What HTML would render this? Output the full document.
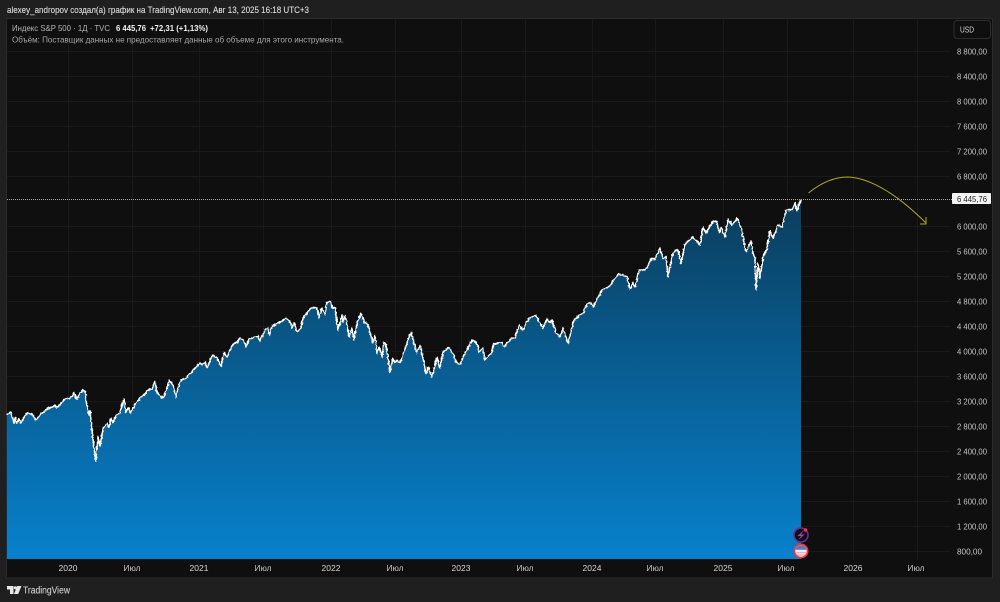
<!DOCTYPE html>
<html><head><meta charset="utf-8"><style>
html,body{margin:0;padding:0;background:#1f1f1f;width:1000px;height:602px;overflow:hidden}
svg{display:block}
text{font-family:"Liberation Sans",sans-serif;font-size:8.5px;fill:#c8c8c8}
.p text{text-anchor:start;fill:#c4c4c4;font-size:8.5px}
.t text{text-anchor:middle;font-size:8.5px;fill:#c4c4c4}
</style></head><body>
<svg width="1000" height="602" viewBox="0 0 1000 602" xmlns="http://www.w3.org/2000/svg">
<defs><linearGradient id="g" gradientUnits="userSpaceOnUse" x1="0" y1="199" x2="0" y2="559">
<stop offset="0" stop-color="#0a3d5c"/><stop offset="1" stop-color="#0881cd"/></linearGradient>
<filter id="j" x="-2%" y="-5%" width="104%" height="110%"><feTurbulence type="fractalNoise" baseFrequency="0.35" numOctaves="2" seed="4"/><feDisplacementMap in="SourceGraphic" scale="3" xChannelSelector="R" yChannelSelector="G"/></filter></defs>
<rect width="1000" height="602" fill="#1f1f1f"/>
<rect x="6.5" y="18.5" width="986" height="559.5" fill="#0f0f0f" stroke="#2a2a2a"/>
<g stroke="#191919" stroke-width="1">
<path d="M7 51.5H950M7 76.5H950M7 101.5H950M7 126.5H950M7 151.5H950M7 176.5H950M7 226.5H950M7 251.5H950M7 276.5H950M7 301.5H950M7 326.5H950M7 351.5H950M7 376.5H950M7 401.5H950M7 426.5H950M7 451.5H950M7 476.5H950M7 501.5H950M7 526.5H950M7 551.5H950"/>
<path d="M68.5 19V559M132.5 19V559M199.5 19V559M263.5 19V559M331.5 19V559M395.5 19V559M461.5 19V559M525.5 19V559M592.5 19V559M655.5 19V559M723.5 19V559M787.5 19V559M853.5 19V559M917.5 19V559"/>
</g>
<path fill="url(#g)" d="M7 415L10 412L12 415L14 423L15 418L17 423L19 419L21 423L24 417L27 413L30 413L33 416L36 420L40 415L47 409L52 407L55 405L57 408L65 399L70 398L74 393L77 399L80 393L83 390L85 391L87 407L89 415L90 410L92 430L94 448L96 461L98 437L100 446L103 429L107 423L109 427L111 418L113 423L115 417L120 412L124 399L126 413L128 408L131 413L135 404L140 398L144 395L148 390L152 389L155 381L157 393L163 398L167 389L169 380L173 385L176 397L178 388L181 380L186 378L190 374L194 369L197 366L200 363L202 365L205 362L207 368L212 356L215 356L217 358L221 366L224 353L227 357L233 344L237 342L240 338L243 340L246 347L249 339L258 336L260 341L265 330L268 328L269 335L272 326L277 324L280 322L286 318L291 323L292 328L294 323L297 332L301 328L303 318L307 313L311 308L317 308L319 318L322 308L325 315L327 302L331 302L332 308L335 308L338 330L342 315L343 322L345 315L349 337L352 328L354 340L357 323L361 313L364 322L368 324L373 343L375 335L377 354L379 347L382 357L384 342L386 345L390 372L393 358L395 363L397 360L400 363L404 352L407 343L411 332L414 343L417 353L420 345L423 358L426 374L428 367L432 377L437 358L440 368L443 352L449 347L453 354L456 362L460 364L467 350L472 340L477 343L479 352L483 348L485 360L492 352L494 344L502 342L504 347L507 343L512 338L515 338L519 325L523 330L526 323L530 318L535 315L538 319L543 328L547 319L550 323L552 320L556 333L560 337L563 328L568 343L574 320L580 315L583 313L587 304L591 303L593 307L597 299L603 289L609 287L613 281L619 274L623 275L627 277L630 290L633 283L635 287L639 270L645 270L647 268L651 259L655 259L660 248L663 258L666 257L668 277L673 253L678 249L681 263L685 244L693 237L700 245L703 227L706 233L713 221L717 222L719 233L721 227L725 237L728 219L732 225L737 218L741 228L746 252L751 241L753 253L755 258L756 290L758 263L760 278L763 258L767 248L770 230L773 238L778 225L782 227L786 210L792 210L795 203L797 211L801 199L801 559L7 559Z"/>
<path filter="url(#j)" fill="none" stroke="#fff" stroke-width="1.5" stroke-linejoin="round" d="M7 415L10 412L12 415L14 423L15 418L17 423L19 419L21 423L24 417L27 413L30 413L33 416L36 420L40 415L47 409L52 407L55 405L57 408L65 399L70 398L74 393L77 399L80 393L83 390L85 391L87 407L89 415L90 410L92 430L94 448L96 461L98 437L100 446L103 429L107 423L109 427L111 418L113 423L115 417L120 412L124 399L126 413L128 408L131 413L135 404L140 398L144 395L148 390L152 389L155 381L157 393L163 398L167 389L169 380L173 385L176 397L178 388L181 380L186 378L190 374L194 369L197 366L200 363L202 365L205 362L207 368L212 356L215 356L217 358L221 366L224 353L227 357L233 344L237 342L240 338L243 340L246 347L249 339L258 336L260 341L265 330L268 328L269 335L272 326L277 324L280 322L286 318L291 323L292 328L294 323L297 332L301 328L303 318L307 313L311 308L317 308L319 318L322 308L325 315L327 302L331 302L332 308L335 308L338 330L342 315L343 322L345 315L349 337L352 328L354 340L357 323L361 313L364 322L368 324L373 343L375 335L377 354L379 347L382 357L384 342L386 345L390 372L393 358L395 363L397 360L400 363L404 352L407 343L411 332L414 343L417 353L420 345L423 358L426 374L428 367L432 377L437 358L440 368L443 352L449 347L453 354L456 362L460 364L467 350L472 340L477 343L479 352L483 348L485 360L492 352L494 344L502 342L504 347L507 343L512 338L515 338L519 325L523 330L526 323L530 318L535 315L538 319L543 328L547 319L550 323L552 320L556 333L560 337L563 328L568 343L574 320L580 315L583 313L587 304L591 303L593 307L597 299L603 289L609 287L613 281L619 274L623 275L627 277L630 290L633 283L635 287L639 270L645 270L647 268L651 259L655 259L660 248L663 258L666 257L668 277L673 253L678 249L681 263L685 244L693 237L700 245L703 227L706 233L713 221L717 222L719 233L721 227L725 237L728 219L732 225L737 218L741 228L746 252L751 241L753 253L755 258L756 290L758 263L760 278L763 258L767 248L770 230L773 238L778 225L782 227L786 210L792 210L795 203L797 211L801 199"/>
<path d="M7 199.5H952" stroke="#a8a8a8" stroke-width="1" stroke-dasharray="1 1"/>
<path d="M808.5 193C822 182 835 177 848 177C872 178 900 197 926 223" fill="none" stroke="#b3a42c" stroke-width="1"/>
<path d="M920 224H926V217" fill="none" stroke="#b3a42c" stroke-width="1"/>
<text x="7" y="13" textLength="302" lengthAdjust="spacingAndGlyphs" style="fill:#dcdcdc;font-size:8.8px;stroke:#dcdcdc;stroke-width:.12">alexey_andropov создал(а) график на TradingView.com, Авг 13, 2025 16:18 UTC+3</text>
<text x="12" y="31" textLength="98" lengthAdjust="spacingAndGlyphs" style="fill:#b4b4b4">Индекс S&amp;P 500 · 1Д · TVC</text>
<text x="116" y="31" textLength="30" lengthAdjust="spacingAndGlyphs" style="fill:#f2f2f2;font-weight:bold">6 445,76</text>
<text x="150" y="31" textLength="58" lengthAdjust="spacingAndGlyphs" style="fill:#f2f2f2;font-weight:bold">+72,31 (+1,13%)</text>
<text x="12" y="42.5" textLength="332" lengthAdjust="spacingAndGlyphs" style="fill:#a8a8a8">Объём: Поставщик данных не предоставляет данные об объеме для этого инструмента.</text>
<rect x="954" y="20.5" width="36.5" height="18" rx="3" fill="#0f0f0f" stroke="#2e2e2e"/>
<text x="960" y="32.5" textLength="14" lengthAdjust="spacingAndGlyphs" style="fill:#d8d8d8;font-size:8.5px">USD</text>
<g class="p">
<text x="957" y="54.5" textLength="30" lengthAdjust="spacingAndGlyphs">8 800,00</text><text x="957" y="79.5" textLength="30" lengthAdjust="spacingAndGlyphs">8 400,00</text><text x="957" y="104.5" textLength="30" lengthAdjust="spacingAndGlyphs">8 000,00</text><text x="957" y="129.5" textLength="30" lengthAdjust="spacingAndGlyphs">7 600,00</text><text x="957" y="154.5" textLength="30" lengthAdjust="spacingAndGlyphs">7 200,00</text><text x="957" y="179.5" textLength="30" lengthAdjust="spacingAndGlyphs">6 800,00</text><text x="957" y="229.5" textLength="30" lengthAdjust="spacingAndGlyphs">6 000,00</text><text x="957" y="254.5" textLength="30" lengthAdjust="spacingAndGlyphs">5 600,00</text><text x="957" y="279.5" textLength="30" lengthAdjust="spacingAndGlyphs">5 200,00</text><text x="957" y="304.5" textLength="30" lengthAdjust="spacingAndGlyphs">4 800,00</text><text x="957" y="329.5" textLength="30" lengthAdjust="spacingAndGlyphs">4 400,00</text><text x="957" y="354.5" textLength="30" lengthAdjust="spacingAndGlyphs">4 000,00</text><text x="957" y="379.5" textLength="30" lengthAdjust="spacingAndGlyphs">3 600,00</text><text x="957" y="404.5" textLength="30" lengthAdjust="spacingAndGlyphs">3 200,00</text><text x="957" y="429.5" textLength="30" lengthAdjust="spacingAndGlyphs">2 800,00</text><text x="957" y="454.5" textLength="30" lengthAdjust="spacingAndGlyphs">2 400,00</text><text x="957" y="479.5" textLength="30" lengthAdjust="spacingAndGlyphs">2 000,00</text><text x="957" y="504.5" textLength="30" lengthAdjust="spacingAndGlyphs">1 600,00</text><text x="957" y="529.5" textLength="30" lengthAdjust="spacingAndGlyphs">1 200,00</text><text x="957" y="554.5" textLength="25" lengthAdjust="spacingAndGlyphs">800,00</text>
</g>
<rect x="952" y="193" width="39" height="11" rx="1" fill="#f4f4f4"/>
<text x="957" y="202" textLength="30" lengthAdjust="spacingAndGlyphs" style="fill:#222;font-size:8.5px">6 445,76</text>
<g class="t">
<text x="68" y="571" style="fill:#d4d4d4">2020</text><text x="132" y="571">Июл</text><text x="199" y="571" style="fill:#d4d4d4">2021</text><text x="263" y="571">Июл</text><text x="331" y="571" style="fill:#d4d4d4">2022</text><text x="395" y="571">Июл</text><text x="461" y="571" style="fill:#d4d4d4">2023</text><text x="525" y="571">Июл</text><text x="592" y="571" style="fill:#d4d4d4">2024</text><text x="655" y="571">Июл</text><text x="723" y="571" style="fill:#d4d4d4">2025</text><text x="786" y="571">Июл</text><text x="853" y="571" style="fill:#d4d4d4">2026</text><text x="916" y="571">Июл</text>
</g>
<circle cx="801" cy="535" r="7" fill="#111" stroke="#6a2c8e" stroke-width="1.6"/>
<path d="M803.5 530.5L797.5 536H801L798.5 540L804.5 534.5H801Z" fill="#a044cc"/>
<circle cx="805.5" cy="530" r="1.8" fill="#f23645"/>
<circle cx="801" cy="551" r="6.6" fill="#f0f0f0" stroke="#f23645" stroke-width="1.8"/>
<path d="M795.5 549.8A5.6 5.6 0 0 1 801 545.4A5.6 5.6 0 0 1 806.5 549.8Z" fill="#4a7fc4"/>
<path d="M796 552.8H806M797.5 555H804.5" stroke="#e89098" stroke-width=".9"/>
<path d="M7 586H13.5V594H10V589.5H7ZM14 594L17.2 586H21.5L18.2 594Z" fill="#e8e8e8"/>
<circle cx="15.4" cy="587.8" r="1.6" fill="#e8e8e8"/>
<text x="23" y="593.5" textLength="47" lengthAdjust="spacingAndGlyphs" style="fill:#cfcfcf;font-size:10px;stroke:#cfcfcf;stroke-width:.12">TradingView</text>
</svg>
</body></html>
